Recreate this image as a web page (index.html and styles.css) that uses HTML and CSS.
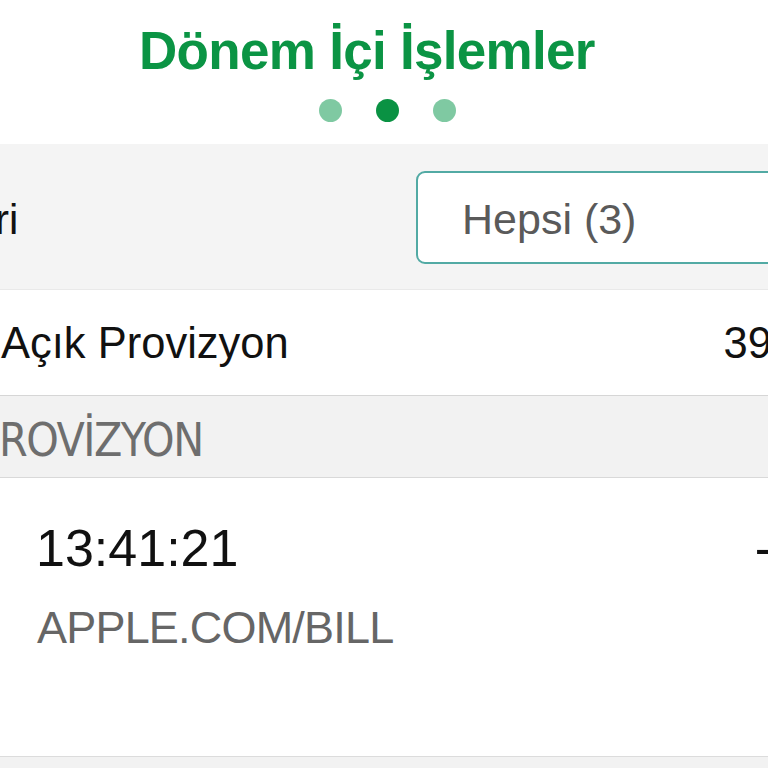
FILE: index.html
```html
<!DOCTYPE html>
<html lang="tr">
<head>
<meta charset="utf-8">
<title>Dönem İçi İşlemler</title>
<link rel="stylesheet" href="styles.css">
</head>
<body>
<div class="page">
  <header class="header">
    <h1 class="title">Dönem İçi İşlemler</h1>
    <div class="dots">
      <span class="dot"></span>
      <span class="dot dot-active"></span>
      <span class="dot"></span>
    </div>
  </header>

  <section class="filter">
    <span class="filter-label">ri</span>
    <div class="select"><span class="select-text">Hepsi (3)</span></div>
  </section>

  <section class="summary">
    <span class="summary-label">Açık Provizyon</span>
    <span class="summary-amount">39</span>
  </section>

  <div class="section-head"><span class="section-title">ROVİZYON</span></div>

  <section class="txn">
    <div class="txn-main">
      <span class="txn-time">13:41:21</span>
      <span class="txn-merchant">APPLE.COM/BILL</span>
    </div>
    <span class="txn-amount">-</span>
  </section>

  <div class="footer-band"></div>
</div>
</body>
</html>
```

FILE: styles.css
```css
html, body {
  margin: 0;
  padding: 0;
  background: #ffffff;
}

.page {
  width: 768px;
  height: 768px;
  overflow: hidden;
  font-family: "Liberation Sans", Arial, sans-serif;
  color: #111111;
  display: flex;
  flex-direction: column;
}

.header {
  height: 144px;
  box-sizing: border-box;
  padding-top: 24px;
  background: #ffffff;
  display: flex;
  flex-direction: column;
}

.title {
  margin: 0;
  padding-left: 139px;
  font-size: 53px;
  line-height: 53px;
  font-weight: 700;
  letter-spacing: -0.7px;
  color: #0b9444;
  white-space: nowrap;
}

.dots {
  margin-top: 22px;
  display: flex;
  justify-content: center;
  gap: 34px;
  padding-left: 6px;
}

.dot {
  width: 23px;
  height: 23px;
  border-radius: 50%;
  background: #7fc9a2;
}

.dot-active {
  background: #0a9243;
}

.filter {
  height: 146px;
  box-sizing: border-box;
  background: #f4f4f4;
  border-bottom: 1px solid #e9e9e9;
  display: flex;
  align-items: center;
  justify-content: space-between;
  padding-top: 2px;
}

.filter-label {
  font-size: 42px;
  line-height: 42px;
  margin-top: 4px;
  margin-left: -5px;
}

.select {
  flex: none;
  width: 400px;
  height: 93px;
  box-sizing: border-box;
  margin-right: -48px;
  border: 2px solid #52aaa4;
  border-radius: 9px;
  background: #ffffff;
  display: flex;
  align-items: center;
  padding-left: 44px;
}

.select-text {
  font-size: 43px;
  line-height: 43px;
  color: #5a5a5a;
  margin-top: 3px;
}

.summary {
  height: 106px;
  box-sizing: border-box;
  border-bottom: 1px solid #d6d6d6;
  display: flex;
  align-items: center;
  justify-content: space-between;
  padding-left: 1px;
}

.summary-label,
.summary-amount {
  font-size: 43.5px;
  line-height: 44px;
}

.summary-amount {
  margin-right: -4px;
}

.section-head {
  height: 82px;
  box-sizing: border-box;
  background: #f2f2f2;
  border-bottom: 1px solid #d9d9d9;
  display: flex;
  align-items: center;
}

.section-title {
  font-family: "Liberation Sans Narrow", "DejaVu Sans Condensed", "Liberation Sans", sans-serif;
  font-stretch: condensed;
  font-size: 46px;
  line-height: 46px;
  letter-spacing: -1.5px;
  color: #6e6e6e;
  margin-top: 6px;
  margin-left: -1px;
}

.txn {
  height: 279px;
  box-sizing: border-box;
  border-bottom: 1px solid #dcdcdc;
  display: flex;
  justify-content: space-between;
  align-items: flex-start;
  padding-top: 44px;
}

.txn-main {
  display: flex;
  flex-direction: column;
  gap: 31px;
}

.txn-time {
  font-size: 52px;
  line-height: 52px;
  padding-left: 36px;
}

.txn-merchant {
  font-size: 45px;
  line-height: 45px;
  padding-left: 37px;
  letter-spacing: -0.8px;
  color: #666666;
}

.txn-amount {
  font-size: 52px;
  line-height: 52px;
  margin-right: -4px;
}

.footer-band {
  flex: 1;
  background: #f2f2f2;
}
```
